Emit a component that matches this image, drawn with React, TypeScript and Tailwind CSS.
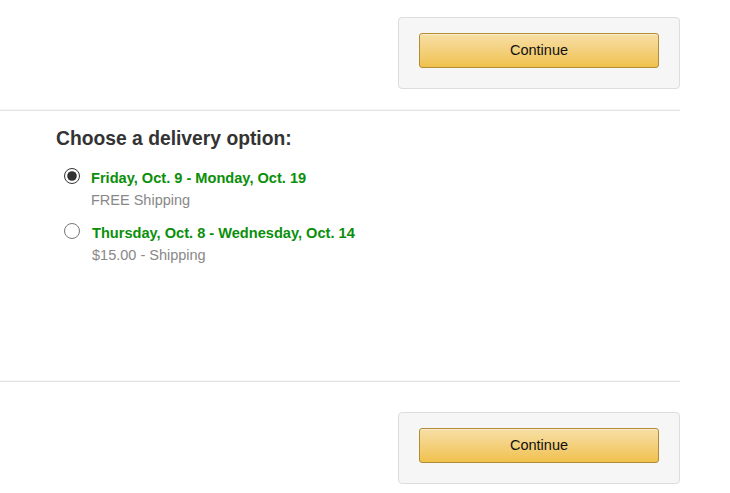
import { useState } from "react";

type Option = {
    id: string;
    dates: string;
    price: string;
};

const options: Option[] = [
    { id: "free", dates: "Friday, Oct. 9 - Monday, Oct. 19", price: "FREE Shipping" },
    { id: "std", dates: "Thursday, Oct. 8 - Wednesday, Oct. 14", price: "$15.00 - Shipping" },
];

const ContinueBox = () => (
    <div className="ml-auto w-[282px] rounded-[4px] border border-[#dddddd] bg-[#f6f6f6] px-[20px] pt-[15px] pb-[20px]">
        <button
            type="button"
            className="block h-[35px] w-[240px] rounded-[3px] border border-[#b28d35] bg-gradient-to-b from-[#f7dfa5] to-[#f0c14b] text-[14.5px] text-[#111111] shadow-[inset_0_1px_0_rgba(255,255,255,0.4)]"
        >
            Continue
        </button>
    </div>
);

const Divider = () => (
    <div className="w-[680px]">
        <div className="h-px bg-[#f7f7f7]" />
        <div className="h-px bg-[#e3e3e3]" />
    </div>
);

const App: React.FC = () => {
    const [selected, setSelected] = useState("free");

    return (
        <div className="h-[493px] w-[730px] bg-white font-['Liberation_Sans',Arial,sans-serif]">
            <div className="w-[680px] pt-[17px] pb-[20px]">
                <ContinueBox />
            </div>
            <Divider />
            <div className="h-[269px] pl-[56px] pt-[16px]">
                <h3 className="text-[19.3px] font-bold leading-[24px] text-[#333333]">Choose a delivery option:</h3>
                <div className="mt-[17px] flex flex-col gap-[12px] pl-[8px]">
                    {options.map((o, i) => (
                        <label key={o.id} className="flex cursor-pointer items-start gap-[11px]">
                            <input
                                type="radio"
                                name="delivery"
                                checked={selected === o.id}
                                onChange={() => setSelected(o.id)}
                                className={`mt-0 h-[16px] w-[16px] accent-[#333333] ${i === 1 ? "mr-[1px]" : ""}`}
                            />
                            <div className="flex flex-col">
                                <span className="text-[14.6px] font-bold leading-[20px] text-[#0a8f0a]">{o.dates}</span>
                                <span className="mt-[1px] text-[14.5px] leading-[22px] text-[#888888]">{o.price}</span>
                            </div>
                        </label>
                    ))}
                </div>
            </div>
            <Divider />
            <div className="w-[680px] pt-[30px]">
                <ContinueBox />
            </div>
        </div>
    );
};

export default App;
